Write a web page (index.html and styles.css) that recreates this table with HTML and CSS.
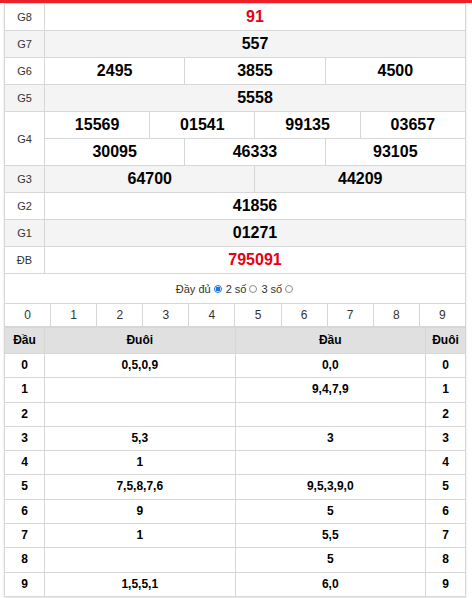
FILE: index.html
```html
<!DOCTYPE html>
<html lang="vi">
<head>
<meta charset="utf-8">
<title>Kết quả xổ số</title>
<link rel="stylesheet" href="styles.css">
</head>
<body>
<div class="topbar"></div>
<div class="box">
  <table class="kq">
    <colgroup><col class="c-label"><col span="12"></colgroup>
    <tr><td class="lb">G8</td><td colspan="12" class="num red">91</td></tr>
    <tr class="alt"><td class="lb">G7</td><td colspan="12" class="num">557</td></tr>
    <tr><td class="lb">G6</td><td colspan="4" class="num">2495</td><td colspan="4" class="num">3855</td><td colspan="4" class="num">4500</td></tr>
    <tr class="alt"><td class="lb">G5</td><td colspan="12" class="num">5558</td></tr>
    <tr><td class="lb" rowspan="2">G4</td><td colspan="3" class="num">15569</td><td colspan="3" class="num">01541</td><td colspan="3" class="num">99135</td><td colspan="3" class="num">03657</td></tr>
    <tr><td colspan="4" class="num">30095</td><td colspan="4" class="num">46333</td><td colspan="4" class="num">93105</td></tr>
    <tr class="alt"><td class="lb">G3</td><td colspan="6" class="num">64700</td><td colspan="6" class="num">44209</td></tr>
    <tr><td class="lb">G2</td><td colspan="12" class="num">41856</td></tr>
    <tr class="alt"><td class="lb">G1</td><td colspan="12" class="num">01271</td></tr>
    <tr><td class="lb">ĐB</td><td colspan="12" class="num red">795091</td></tr>
  </table>
  <div class="mode">
    <span>Đầy đủ</span><span class="radio on"></span>
    <span>2 số</span><span class="radio"></span>
    <span>3 số</span><span class="radio"></span>
  </div>
  <table class="digits">
    <tr><td>0</td><td>1</td><td>2</td><td>3</td><td>4</td><td>5</td><td>6</td><td>7</td><td>8</td><td>9</td></tr>
  </table>
  <table class="loto">
    <colgroup><col class="c-side"><col><col><col class="c-side"></colgroup>
    <tr class="head"><th>Đầu</th><th>Đuôi</th><th>Đầu</th><th>Đuôi</th></tr>
    <tr><td>0</td><td>0,5,0,9</td><td>0,0</td><td>0</td></tr>
    <tr><td>1</td><td></td><td>9,4,7,9</td><td>1</td></tr>
    <tr><td>2</td><td></td><td></td><td>2</td></tr>
    <tr><td>3</td><td>5,3</td><td>3</td><td>3</td></tr>
    <tr><td>4</td><td>1</td><td></td><td>4</td></tr>
    <tr><td>5</td><td>7,5,8,7,6</td><td>9,5,3,9,0</td><td>5</td></tr>
    <tr><td>6</td><td>9</td><td>5</td><td>6</td></tr>
    <tr><td>7</td><td>1</td><td>5,5</td><td>7</td></tr>
    <tr><td>8</td><td></td><td>5</td><td>8</td></tr>
    <tr><td>9</td><td>1,5,5,1</td><td>6,0</td><td>9</td></tr>
  </table>
</div>
<div class="strip"></div>
</body>
</html>
```

FILE: styles.css
```css
html, body {
  margin: 0;
  padding: 0;
  background: #fff;
  font-family: "Liberation Sans", Arial, sans-serif;
  color: #000;
}

.topbar {
  height: 3px;
  background: #ed2129;
}

.box {
  width: 462px;
  margin-left: 4px;
  box-shadow: 0 1px 2px rgba(0, 0, 0, 0.12);
}

table {
  width: 462px;
  border-collapse: collapse;
  table-layout: fixed;
}

td, th {
  border: 1px solid #d7d7d7;
  padding: 0;
  text-align: center;
  white-space: nowrap;
}

.kq .c-label { width: 40px; }

.kq td {
  line-height: 26px;
}

.kq .alt td { background: #f4f4f4; }

.kq .lb {
  font-size: 11px;
  color: #333;
}

.kq .num {
  font-size: 16px;
  font-weight: bold;
}

.kq .red { color: #e60012; }

.mode {
  height: 29px;
  border-left: 1px solid #d7d7d7;
  border-right: 1px solid #d7d7d7;
  display: flex;
  align-items: center;
  justify-content: center;
  gap: 3px;
  font-size: 11px;
  color: #333;
  box-sizing: border-box;
}

.radio {
  width: 8px;
  height: 8px;
  border-radius: 50%;
  border: 1px solid #8c8c8c;
  background: #fff;
  box-sizing: border-box;
  margin-right: 1px;
}

.radio.on {
  border: 1px solid #1a73e8;
  background: radial-gradient(circle, #1a73e8 0 2.2px, #fff 2.6px);
}

.digits td {
  font-size: 12px;
  color: #333;
  line-height: 22px;
}

.loto .c-side { width: 40px; }

.loto th {
  background: #e0e0e0;
  font-size: 12px;
  font-weight: bold;
  line-height: 25px;
}

.loto td {
  font-size: 12px;
  font-weight: bold;
  line-height: 23.3px;
}

.strip {
  height: 2px;
  margin-top: 1px;
  margin-left: 94px;
  background: linear-gradient(to right, #f0c020 0 218px, #8a9bb8 218px 266px, #7a5ac8 266px 300px, #2a2a3a 300px);
}
```
